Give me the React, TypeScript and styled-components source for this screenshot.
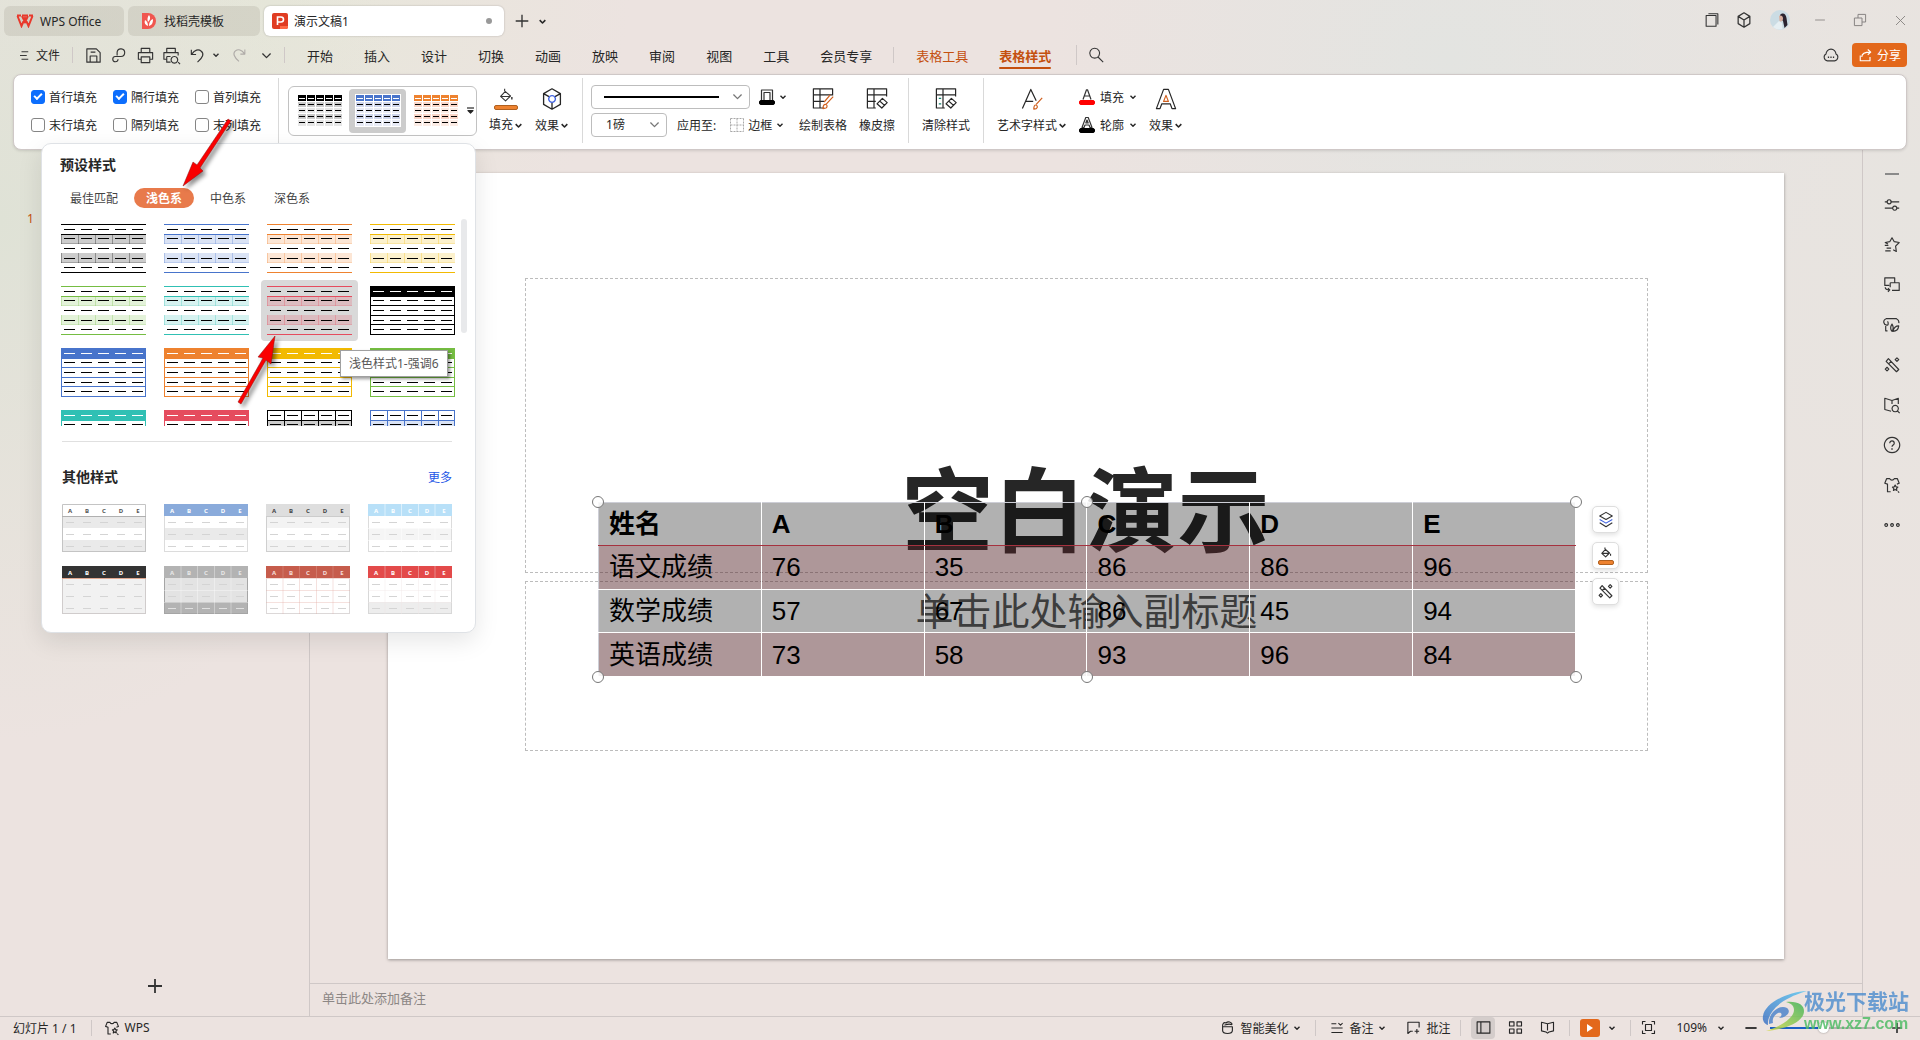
import React from "react";
import styled, { createGlobalStyle, css } from "styled-components";

const ui = `"Noto Sans", "Noto Sans CJK SC", sans-serif`;
const ink = "#333333";
const accent = "#c4500f";
const orange = "#e3681b";
const line = "#cfc8c7";

const Global = createGlobalStyle`
  *, *::before, *::after { box-sizing: border-box; }
  body { margin: 0; font-family: ${ui}; font-size: 12px; color: #262626; }
  button, select, input { font: inherit; color: inherit; }
  button { border: 0; padding: 0; background: none; cursor: pointer; white-space: nowrap; }
  svg { display: block; flex: none; }
`;

const Page = styled.div`
  position: relative;
  min-height: 100vh;
  display: flex;
  flex-direction: column;
  overflow: hidden;
  background:
    radial-gradient(ellipse 420px 520px at 0 220px, #dfe2d6 0%, rgba(223, 226, 214, 0) 100%),
    radial-gradient(ellipse 360px 300px at 270px 0, #e7e7da 0%, rgba(231, 231, 218, 0) 100%),
    radial-gradient(ellipse 400px 400px at 1450px 60px, #e3e4e1 0%, rgba(227, 228, 225, 0) 100%),
    radial-gradient(ellipse 600px 700px at 1920px 200px, #e7e4e0 0%, rgba(231, 228, 224, 0) 100%),
    #ece3e0;
`;

/* ---------- icons ---------- */

const glyphs: Record<string, React.ReactNode> = {
  menu: <path d="M6 5h9M4 10h9M6 15h9" />,
  save: <path d="M3 3h10l4 4v10H3zM6.5 17v-6.5h7V17M7 6.5h5" />,
  exportPdf: <path d="M7.500 10V6.500a4 4 0 1 1 4 4.500H5.500a2.800 2.800 0 1 0 3 3" />,
  print: <path d="M5.500 7V2.500h9V7M5.500 14H2.500V7h15v7h-3M5.500 11.500h9v6h-9z" />,
  preview: <path d="M5 7V2.500h9V7M5 14H2V7h15v3M5 11v6h4M5 11h4M17 17l2 2M13 11a3.500 3.500 0 1 0 .1 0z" />,
  undo: <path d="M3.500 4v5h5M4 8.500C7 4 11 3 14 5.500S16 12 10 17" />,
  redo: <path d="M16.500 4v5h-5M16 8.500C13 4 9 3 6 5.500S4 12 10 17" />,
  search: <path d="M8.500 2.500a5.500 5.500 0 1 0 .1 0zM12.500 12.500l5.500 5.500" />,
  plus: <path d="M10 3v14M3 10h14" />,
  minus: <path d="M3 10h14" />,
  windows: <path d="M3.500 5h11v12h-11zM6 3h10.500v12" />,
  cube: <path d="M10 2l6.500 4v8L10 18l-6.500-4V6zM3.500 6L10 10l6.500-4M10 10v8" />,
  restore: <path d="M3 7.500h9.500V17H3zM7.500 7.500V3H17v9.500h-4.500" />,
  close: <path d="M4 4l12 12M16 4L4 16" />,
  cloud: <><path d="M6 16.500a4 4 0 0 1-1.500-7.500 5.500 5.500 0 0 1 11 0 4 4 0 0 1-1.500 7.500z" /><path d="M6.500 12.500h1.400M9.300 12.500h1.400M12.100 12.500h1.400" strokeWidth="1.600" /></>,
  share: <path d="M3 10v7h13v-5M5 12c0-4 3-6.500 11.500-6.500M13 2l4 3.500-4 3.500" />,
  bucket: <><path d="M8 4l7 6-5.500 5.500L4 10.500 9.500 4.500M8.500 5V2M4.500 10.500h10" /><path d="M16.500 11v3" strokeWidth="1.600" /></>,
  effect: <><path d="M10 1.500l7 4v9l-7 4-7-4v-9zM3 5.500l4.500 2.500M17 5.500L12.500 8M10 18.500V13" /><path d="M10 7.200a2.800 2.800 0 1 0 .1 0z" stroke="#3c5fe0" /></>,
  drawTable: <><path d="M11 17.500H2V1.500h16V7M2 6.500h16M7.500 1.500v16M2 12h9" /><path d="M18.500 8l-6 6.500M10 18c0-2 .5-3.500 2-3.500s2 2 .5 3zM16 6.500l-5 6" stroke="#d0601f" /></>,
  erase: <path d="M9 17.500H2V1.500h16V8M2 6.500h16M7.500 1.500v16M2 12h7M14.500 9.500l4 3.500-4.500 4.500-4-3.500zM12 11.500l4.500 4" />,
  clear: <><path d="M9 17.500H2V1.500h16V8M2 6.500h16M7.500 1.500v16M14.500 9.500l4 3.500-4.500 4.500-4-3.500zM12 11.500l4.500 4" /><path d="M4 9.500h2M4 14h2" stroke="#17806d" /></>,
  wordArt: <><path d="M2 18L9 2l4.500 9.500M4.500 12H11" /><path d="M18.500 9l-5 5.500M11.500 18.500c0-2 .3-3.500 1.600-3.500s2 2 .5 3z" stroke="#d0601f" /></>,
  artEffect: <><path d="M2 18L8 2h4l6 16h-3l-1.500-4h-7L5 18z" /><path d="M10 7l-2 5h4z" stroke="#d0601f" /></>,
  settings: <><path d="M2 6.500h3M8.500 6.500H18M2 13.500h9M15 13.500h3" /><path d="M6.800 4.200a2.300 2.300 0 1 0 .1 0zM13 11.200a2.300 2.300 0 1 0 .1 0z" /></>,
  star: <path d="M5.500 9L2.500 7.200l5-.9L10 2l2.500 4.300 5.500.9-4 4 .8 6-3.500-2M2 10.500h4M4 13.500h5M2.500 16.500h6" />,
  swap: <path d="M7 10.500H2V2h11v5M8 7.500h10V16H10M8 7.500v5M2.500 12.500c0 2.500 1.500 3 5 3M5.500 13.500l2 2-2 2" />,
  leaf: <path d="M5 16.500H3V11M5.500 10a3.500 3.500 0 0 1-2-7h11.500c2 1 3 3 2.500 5M5.500 10C6 8 6 7 5 6M10 17c-2.500-3-2-5 0-8 2 3 2 5 0 8zM11 17c1-4 3-6 6.500-6-.5 4-3 6-6.500 6z" />,
  wand: <path d="M6 3l11.500 12-2.500 2.500L3.500 6zM6 9l3-3M15.500 2l2 2-2 2-2-2zM4.500 12.500l2 2-2 2-2-2z" />,
  bookSearch: <path d="M9 17l-7-2V2.500L10 5l7-2.500V9M10 5v4M13.500 10.500a3.500 3.500 0 1 0 .1 0zM16 16.500l2.500 2.500" />,
  help: <><path d="M10 1.500a8.500 8.500 0 1 0 .1 0zM7.500 8c0-3.500 5-3.500 5 0 0 2-2.500 2-2.500 4" /><path d="M10 13.700v1.500" strokeWidth="1.600" /></>,
  shirt: <path d="M8.500 17.500H5V9L2 8l2-5h3.500c1 2 4 2 5 0H16l2 5-2.500 1M13.500 10l1 2 2 .3-1.500 1.600.4 2.200-1.900-1-1.900 1 .4-2.200-1.500-1.600 2-.3zM16.500 17l1.500 1.500" />,
  more: <path d="M3.500 8.500a1.500 1.500 0 1 0 .1 0zM10 8.500a1.500 1.500 0 1 0 .1 0zM16.500 8.500a1.500 1.500 0 1 0 .1 0z" />,
  beautify: <path d="M3.500 9h13v5c0 2-2 4-6.500 4s-6.500-2-6.500-4zM3.500 9C3 5 5 2.500 8 4c3-3 7-1 8.500 2M6 7c3-1 6-3 10-.5" />,
  notes: <path d="M2 4h7M2 10h16M2 16.500h16M12 3l3 3 3-3" />,
  comment: <path d="M9 15H6l-3.500 3V3h15v7M14.500 12v6M11.500 15h6" />,
  normalView: <path d="M1.500 2.500h17v15h-17zM6.500 2.500v15" />,
  gridView: <path d="M2 2.500h6v5.500H2zM12 2.500h6v5.500h-6zM2 12h6v5.500H2zM12 12h6v5.500h-6z" />,
  readView: <path d="M10 5L2 3v11.500l6 1.500 2 1.500 2-1.500 6-1.500V3zM10 5v9" />,
  fit: <path d="M2 6V2h4M14 2h4v4M18 14v4h-4M6 18H2v-4M6 6h8v8H6z" />,
  layers: <><path d="M10 1.500l7 4-7 4-7-4zM3 13l7 4.500 7-4.500" /><path d="M3 9.500l7 4 7-4" stroke="#3c5fe0" /></>,
};

const Svg = styled.svg<{ $w?: number }>`
  fill: none;
  stroke: currentColor;
  stroke-width: ${(p) => p.$w || 1.2};
  stroke-linejoin: round;
`;

const Icon = ({ name, size = 18, weight }: { name: string; size?: number; weight?: number }) => (
  <Svg width={size} height={size} viewBox="0 0 20 20" $w={weight} aria-hidden>{glyphs[name]}</Svg>
);

const Caret = ({ size = 8, weight = 1.4 }: { size?: number; weight?: number }) => (
  <Svg width={size} height={size} viewBox="0 0 8 8" $w={weight} aria-hidden><path d="M1.500 2.800L4 5.300l2.500-2.500" /></Svg>
);

/* ---------- window tabs ---------- */

const TitleBar = styled.header`
  display: flex;
  align-items: center;
  height: 36px;
  padding: 6px 0 0 4px;
  gap: 4px;
`;

const DocTab = styled.button<{ $width: number; $active?: boolean }>`
  display: flex;
  align-items: center;
  gap: 6px;
  width: ${(p) => p.$width}px;
  height: 30px;
  padding: 0 12px;
  border-radius: 6px;
  background: ${(p) => (p.$active ? "#ffffff" : "rgba(120, 115, 100, 0.15)")};
  box-shadow: ${(p) => (p.$active ? "0 0 2px rgba(0, 0, 0, 0.25)" : "none")};
  ${(p) => p.$active && css`padding: 0 12px 0 8px;`}
`;

const UnsavedDot = styled.span`
  width: 6px;
  height: 6px;
  margin-left: auto;
  border-radius: 50%;
  background: #999999;
`;

const IconButton = styled.button<{ $width?: number; $muted?: boolean }>`
  display: grid;
  place-items: center;
  width: ${(p) => p.$width || 26}px;
  height: 28px;
  color: ${(p) => (p.$muted ? "#aeaaa7" : ink)};
`;

const WindowControls = styled.div`
  display: flex;
  align-items: center;
  margin-left: auto;
  padding-bottom: 2px;
`;

const FrameButton = styled(IconButton)`
  width: 40px;
  color: #85817f;
`;

/* ---------- menu ---------- */

const MenuBar = styled.nav`
  display: flex;
  align-items: center;
  height: 38px;
  padding: 0 13px 0 17px;
`;

const FileButton = styled.button`
  display: flex;
  align-items: center;
  gap: 4px;
  height: 28px;
`;

const Divider = styled.span<{ $h?: number }>`
  flex: none;
  width: 1px;
  height: ${(p) => p.$h || 16}px;
  background: ${line};
`;

const QuickAccess = styled.div`
  display: flex;
  align-items: center;
  padding: 0 8px 0 12px;
`;

const QuickButtons = styled.div`
  display: flex;
  align-items: center;
  padding-left: 7px;
`;

const MenuTabs = styled.div`
  display: flex;
  align-items: center;
  gap: 31px;
  padding: 0 21px 0 22px;
`;

const MenuTab = styled.button<{ $context?: boolean; $current?: boolean }>`
  position: relative;
  height: 28px;
  font-size: 13px;
  color: ${(p) => (p.$context ? accent : "#262626")};
  ${(p) => p.$current && css`
    font-weight: 700;
    &::after {
      content: "";
      position: absolute;
      left: 0;
      right: 0;
      bottom: 0;
      height: 2px;
      border-radius: 1px;
      background: ${accent};
    }
  `}
`;

const SearchSlot = styled.div`
  display: flex;
  align-items: center;
  gap: 6px;
  padding-left: 4px;
`;

const MenuEnd = styled.div`
  display: flex;
  align-items: center;
  gap: 8px;
  margin-left: auto;
`;

const ShareButton = styled.button`
  display: flex;
  align-items: center;
  gap: 4px;
  height: 24px;
  padding: 0 6px;
  border-radius: 4px;
  background: ${orange};
  color: #ffffff;
`;

/* ---------- ribbon ---------- */

const RibbonWrap = styled.section`
  position: relative;
  z-index: 2;
  padding: 0 13px;
`;

const Ribbon = styled.div`
  display: flex;
  align-items: center;
  height: 76px;
  padding-bottom: 3px;
  border: 1px solid ${line};
  border-radius: 8px;
  background: #ffffff;
  box-shadow: 0 1px 3px rgba(0, 0, 0, 0.12);
`;

const Group = styled.div<{ $left?: number; $last?: boolean }>`
  display: flex;
  align-items: center;
  gap: 12px;
  height: 65px;
  padding: 0 13px 0 ${(p) => p.$left || 13}px;
  border-right: ${(p) => (p.$last ? "0" : "1px solid #d9d9d9")};
`;

const CheckGrid = styled.div`
  display: grid;
  grid-template-columns: 82px 82px 70px;
  gap: 10px 0;
`;

const CheckLabel = styled.label`
  display: flex;
  align-items: center;
  gap: 4px;
  height: 18px;
`;

const CheckBox = styled.input`
  appearance: none;
  display: grid;
  place-items: center;
  width: 14px;
  height: 14px;
  margin: 0;
  border: 1px solid #858585;
  border-radius: 3px;
  background: #ffffff;
  &:checked { border-color: #0d6efd; background: #0d6efd; }
  &:checked::after {
    content: "";
    width: 8px;
    height: 5px;
    border: solid #ffffff;
    border-width: 0 0 2px 2px;
    transform: translateY(-1px) rotate(-45deg);
  }
`;

const Gallery = styled.div`
  display: flex;
  align-items: center;
  width: 189px;
  height: 50px;
  padding-left: 2px;
  gap: 1px;
  border: 1px solid #c2c2c2;
  border-radius: 6px;
`;

const GalleryItem = styled.button<{ $on?: boolean }>`
  display: grid;
  place-items: center;
  width: 57px;
  height: 44px;
  border-radius: 4px;
  background: ${(p) => (p.$on ? "#cccccc" : "none")};
`;

const GalleryMore = styled.button`
  flex: 1;
  height: 44px;
  display: grid;
  place-items: center;
`;

const BigButton = styled.button`
  display: flex;
  flex-direction: column;
  align-items: center;
  gap: 6px;
`;

const ColorBar = styled.span<{ $c: string; $edge?: string; $w: number }>`
  display: block;
  width: ${(p) => p.$w}px;
  height: 5px;
  border: 1px solid ${(p) => p.$edge || p.$c};
  border-radius: 2px;
  background: ${(p) => p.$c};
`;

const IconStack = styled.span`
  display: flex;
  flex-direction: column;
  align-items: center;
  color: ${ink};
`;

const Caption = styled.span`
  display: flex;
  align-items: center;
  gap: 1px;
  height: 18px;
  line-height: 18px;
`;

const Rows = styled.div<{ $gap: number }>`
  display: flex;
  flex-direction: column;
  gap: ${(p) => p.$gap}px;
`;

const Row = styled.div<{ $gap: number }>`
  display: flex;
  align-items: center;
  gap: ${(p) => p.$gap}px;
`;

const RowButton = styled.button<{ $gap?: number }>`
  display: flex;
  align-items: center;
  gap: ${(p) => p.$gap || 4}px;
  height: 18px;
`;

const SelectWrap = styled.label<{ $width: number }>`
  position: relative;
  display: flex;
  align-items: center;
  width: ${(p) => p.$width}px;
  height: 24px;
  border: 1px solid #bdbdbd;
  border-radius: 4px;
  color: #777777;
  select {
    appearance: none;
    width: 100%;
    height: 22px;
    padding: 0 14px;
    border: 0;
    background: none;
    color: #262626;
  }
  svg { position: absolute; right: 5px; }
`;

const LineSample = styled.span`
  position: absolute;
  left: 12px;
  right: 30px;
  height: 2px;
  background: #000000;
`;

const GalleryThumb = ({ head, dark, light, edge }: { head: string; dark: string; light: string; edge?: boolean }) => (
  <svg width="46" height="33" viewBox="-1 -1 46 33" shapeRendering="crispEdges" aria-hidden>
    {edge && <rect x="-1" y="-1" width="46" height="33" fill="#fff" />}
    {[0, 1, 2, 3, 4].map((c) => (
      <g key={c}>
        <rect x={c * 9} y="0" width="8" height="6" fill={head} />
        <rect x={c * 9 + 1} y="3" width="6" height="1" fill="#fff" />
        {[1, 2, 3, 4].map((r) => (
          <g key={r}>
            <rect x={c * 9} y={r * 6 + 1} width="8" height={r === 4 ? 6 : 5} fill={r % 2 ? dark : light} />
            <rect x={c * 9 + 1} y={r * 6 + 3} width="6" height="1" fill="#000" />
          </g>
        ))}
      </g>
    ))}
  </svg>
);

/* ---------- style popover ---------- */

const Popover = styled.div`
  position: absolute;
  top: 69px;
  left: 41px;
  width: 435px;
  padding: 11px 0 18px;
  border: 1px solid #dfe2e6;
  border-radius: 10px;
  background: #ffffff;
  box-shadow: 0 8px 24px rgba(0, 0, 0, 0.1);
`;

const PopTitle = styled.h2`
  margin: 0;
  font-size: 14px;
  line-height: 20px;
  font-weight: 700;
  color: #262626;
`;

const PresetHead = styled.div`
  padding-left: 18px;
`;

const ToneTabs = styled.div`
  display: flex;
  gap: 4px;
  padding: 13px 0 10px 16px;
`;

const ToneTab = styled.button<{ $on?: boolean }>`
  height: 20px;
  padding: 0 12px;
  border-radius: 10px;
  color: ${(p) => (p.$on ? "#ffffff" : "#444444")};
  background: ${(p) => (p.$on ? "#e87a4b" : "none")};
  font-weight: ${(p) => (p.$on ? 700 : 400)};
`;

const PresetArea = styled.div`
  position: relative;
  height: 208px;
  overflow: hidden;
  padding-left: 13px;
`;

const PresetGrid = styled.div`
  display: grid;
  grid-template-columns: repeat(4, 97px);
  gap: 1px 6px;
`;

const PresetButton = styled.button<{ $on?: boolean }>`
  display: grid;
  place-items: center;
  height: 61px;
  border-radius: 4px;
  background: ${(p) => (p.$on ? "#d9d9d9" : "none")};
`;

const ScrollThumb = styled.span`
  position: absolute;
  top: 1px;
  right: 8px;
  width: 6px;
  height: 114px;
  border-radius: 3px;
  background: #e8e9eb;
`;

const OtherSection = styled.section`
  margin: 15px 23px 0 20px;
  padding-top: 25px;
  border-top: 1px solid #e0e0e0;
`;

const OtherHead = styled.div`
  display: flex;
  justify-content: space-between;
  align-items: center;
  margin-bottom: 17px;
`;

const MoreLink = styled.a`
  color: #2457e6;
  text-decoration: none;
`;

const OtherGrid = styled.div`
  display: grid;
  grid-template-columns: repeat(4, 84px);
  justify-content: space-between;
  gap: 14px 0;
`;

const Tooltip = styled.div`
  position: absolute;
  top: 276px;
  left: 340px;
  padding: 0 8px;
  height: 27px;
  line-height: 25px;
  border: 1px solid #a0a0a0;
  background: #ffffff;
  color: #575757;
  box-shadow: 2px 2px 3px rgba(0, 0, 0, 0.4);
`;

type Preset = { kind: 1 | 2 | 3; c: string };
const presets: Preset[] = [
  { kind: 1, c: "#000000" }, { kind: 1, c: "#4874cb" }, { kind: 1, c: "#ee822f" }, { kind: 1, c: "#f2ba02" },
  { kind: 1, c: "#75bd42" }, { kind: 1, c: "#30c0b4" }, { kind: 1, c: "#e54c5e" }, { kind: 2, c: "#000000" },
  { kind: 2, c: "#4874cb" }, { kind: 2, c: "#ee822f" }, { kind: 2, c: "#f2ba02" }, { kind: 2, c: "#75bd42" },
  { kind: 2, c: "#30c0b4" }, { kind: 2, c: "#e54c5e" }, { kind: 3, c: "#000000" }, { kind: 3, c: "#4874cb" },
];

const PresetThumb = ({ kind, c }: Preset) => {
  const cols = [0, 1, 2, 3, 4];
  const dashRows = [5, 14, 24, 34, 43];
  return (
    <svg width="85" height="49" viewBox="0 0 85 49" shapeRendering="crispEdges" aria-hidden>
      {kind !== 2 && [[11, 9], [29, 10]].map(([y, h]) => (
        <g key={y}>
          <rect x="0" y={y} width="85" height={h} fill={c} opacity="0.2" />
          <rect x="0" y={y + h - 1} width="85" height="1" fill={c} opacity="0.2" />
          {cols.map((i) => <rect key={i} x={i * 17} y={y} width="1" height={h} fill={c} opacity="0.3" />)}
        </g>
      ))}
      {kind === 1 && [0, 10, 48].map((y) => <rect key={y} y={y} width="85" height="1" fill={c} />)}
      {kind !== 1 && (
        <>
          <rect x="0.5" y="0.5" width="84" height="48" fill="none" stroke={c} />
          {[10, 19, 29, 38].map((y) => <rect key={y} y={y} width="85" height="1" fill={c} />)}
        </>
      )}
      {kind === 2 && <rect width="85" height="11" fill={c} />}
      {kind === 3 && cols.map((i) => <rect key={i} x={i * 17} width="1" height="49" fill={c} />)}
      {dashRows.map((y, r) => cols.map((i) => (
        <rect key={`${r}${i}`} x={i * 17 + 3} y={y} width="11" height="1" fill={kind === 2 && r === 0 ? "#fff" : "#000"} />
      )))}
    </svg>
  );
};

type Other = { head: string; text: string; rows: string[]; edge: string; grid?: string; under?: string };
const others: Other[] = [
  { head: "#ffffff", text: "#555555", rows: ["#eaeaea", "#ffffff", "#eaeaea"], edge: "#c4c4c4", under: "#b0b0b0" },
  { head: "#8aabdb", text: "#ffffff", rows: ["#ffffff", "#eaeaea", "#ffffff"], edge: "#dcdcdc" },
  { head: "#dedede", text: "#444444", rows: ["#f3f3f3", "#ffffff", "#f3f3f3"], edge: "#cfcfcf", under: "#cccccc" },
  { head: "#b8e0f8", text: "#ffffff", rows: ["#ffffff", "#f5f5f5", "#ffffff"], edge: "#dcdcdc", grid: "rgba(255,255,255,.5)" },
  { head: "#333333", text: "#ffffff", rows: ["#f1f1f1", "#f1f1f1", "#f1f1f1"], edge: "#d0cccc", under: "#e0a890" },
  { head: "#b3b3b3", text: "#e8e8e8", rows: ["#e3e3e3", "#e3e3e3", "#b3b3b3"], edge: "#a5a5a5", grid: "rgba(255,255,255,.35)" },
  { head: "#c65c4c", text: "#f5dcd8", rows: ["#ffffff", "#ffffff", "#ffffff"], edge: "#dcd8d8", grid: "rgba(225,170,160,.35)", under: "#f2dcd8" },
  { head: "#e34a4a", text: "#ffffff", rows: ["#ffffff", "#ffffff", "#ededed"], edge: "#d8d8d8", grid: "rgba(240,230,230,.4)" },
];

const ThumbText = styled.text`
  font: 700 6px ${ui};
  text-anchor: middle;
  stroke: none;
`;

const OtherThumb = ({ o }: { o: Other }) => (
  <svg width="84" height="48" viewBox="0 0 84 48" aria-hidden>
    {o.rows.map((c, i) => <rect key={i} y={12 + i * 12} width="84" height="12" fill={c} />)}
    <rect x="0.5" y="0.5" width="83" height="47" fill="none" stroke={o.edge} />
    <rect width="84" height="12" fill={o.head} />
    {o.head === "#ffffff" && <path d="M.5 12V.5h83V12" fill="none" stroke={o.edge} />}
    {o.under && <path d="M0 12.500h84" stroke={o.under} />}
    {o.grid && <path d="M17 0v48M33.500 0v48M50.500 0v48M67 0v48M0 24.500h84M0 36.500h84" stroke={o.grid} />}
    {["A", "B", "C", "D", "E"].map((t, i) => {
      const x = 8 + i * 17;
      return (
        <g key={t}>
          <ThumbText x={x} y="8.500" fill={o.text}>{t}</ThumbText>
          {[18, 30, 42].map((y, r) => (
            <rect key={y} x={x - 4} y={y} width="8" height="1" fill={o.rows[r] === "#b3b3b3" ? "#e0e0e0" : "#d4d4d4"} />
          ))}
        </g>
      );
    })}
  </svg>
);

/* ---------- workspace ---------- */

const Workspace = styled.main`
  flex: 1;
  display: grid;
  grid-template-columns: 309px 1fr 57px;
`;

const Outline = styled.aside`
  display: flex;
  flex-direction: column;
  justify-content: space-between;
  align-items: center;
  padding: 60px 0 16px;
`;

const SlideNumber = styled.span`
  align-self: flex-start;
  padding-left: 27px;
  line-height: 18px;
  color: ${accent};
`;

const Editor = styled.div`
  display: flex;
  flex-direction: column;
  border-left: 1px solid ${line};
  border-right: 1px solid ${line};
`;

const Stage = styled.div`
  flex: 1;
  display: flex;
  padding: 23px 78px 24px;
`;

const Slide = styled.section`
  position: relative;
  flex: 1;
  background: #ffffff;
  box-shadow: 0 1px 3px rgba(0, 0, 0, 0.35);
`;

const Placeholder = styled.div<{ $top: number; $height: number }>`
  position: absolute;
  left: 137px;
  right: 136px;
  top: ${(p) => p.$top}px;
  height: ${(p) => p.$height}px;
  border: 1px dashed #bcbcbc;
  text-align: center;
`;

const SlideTitle = styled.h1`
  position: absolute;
  inset: auto 2px 11px 0;
  margin: 0;
  font: 700 92px/112px "Noto Sans CJK SC", sans-serif;
  color: #262626;
`;

const SlideSubtitle = styled.p`
  margin: 0;
  font: 400 38px/54px "Noto Sans CJK SC", sans-serif;
  color: #595959;
`;

const TableFrame = styled.div`
  position: absolute;
  left: 210px;
  right: 208px;
  top: 329px;
`;

const ScoreTable = styled.table`
  width: 100%;
  height: 175px;
  table-layout: fixed;
  border-collapse: collapse;
  border: 1px solid #cdced6;
  font: 400 26px/32px "Liberation Sans", "Noto Sans CJK SC", sans-serif;
  color: #000000;
  th, td {
    height: 43px;
    padding: 0 10px;
    text-align: left;
    border-right: 1px solid #ffffff;
    border-bottom: 1px solid #ffffff;
    background: rgba(0, 0, 0, 0.306);
  }
  tbody th { font-weight: 400; }
  thead th { border-bottom-color: #a5323f; }
  tbody tr:nth-child(odd) > * { background: rgba(81, 32, 36, 0.465); }
`;

const Handle = styled.span<{ $x: number; $y: number }>`
  position: absolute;
  left: ${(p) => p.$x}%;
  top: ${(p) => p.$y}%;
  width: 12px;
  height: 12px;
  margin: -6px;
  border: 1px solid #777777;
  border-radius: 50%;
  background: rgba(255, 255, 255, 0.85);
`;

const FloatTools = styled.div`
  position: absolute;
  top: 4px;
  left: calc(100% + 16px);
  display: flex;
  flex-direction: column;
  gap: 9px;
`;

const FloatButton = styled.button`
  display: grid;
  place-items: center;
  align-content: center;
  width: 27px;
  height: 27px;
  border: 1px solid #dedede;
  border-radius: 5px;
  background: #ffffff;
  box-shadow: 0 2px 5px rgba(0, 0, 0, 0.12);
  color: ${ink};
`;

const Notes = styled.label`
  display: flex;
  align-items: center;
  height: 33px;
  padding: 0 12px 4px;
  border-top: 1px solid ${line};
`;

const NotesInput = styled.input`
  width: 100%;
  padding: 0;
  border: 0;
  outline: 0;
  background: none;
  font-size: 13px;
  &::placeholder { color: #8c8785; opacity: 1; }
`;

const SideBar = styled.aside`
  display: flex;
  flex-direction: column;
  align-items: center;
  padding-top: 12px;
`;

const SideButton = styled(IconButton)<{ $first?: boolean }>`
  height: ${(p) => (p.$first ? 23 : 40)}px;
  color: ${(p) => (p.$first ? "#8a8a8a" : ink)};
`;

/* ---------- status bar ---------- */

const StatusBar = styled.footer`
  display: flex;
  align-items: center;
  gap: 10px;
  height: 24px;
  padding: 0 18px 2px 13px;
  border-top: 1px solid ${line};
`;

const StatusButton = styled.button<{ $gap?: number }>`
  display: flex;
  align-items: center;
  gap: ${(p) => p.$gap || 5}px;
  height: 20px;
`;

const StatusGroup = styled.div<{ $gap?: number; $pl?: number; $pr?: number; $end?: boolean }>`
  display: flex;
  align-items: center;
  gap: ${(p) => p.$gap || 0}px;
  padding: 0 ${(p) => p.$pr || 0}px 0 ${(p) => p.$pl || 0}px;
  margin-left: ${(p) => (p.$end ? "auto" : "0")};
`;

const ViewButton = styled.button<{ $on?: boolean }>`
  display: grid;
  place-items: center;
  width: 24px;
  height: 22px;
  border-radius: 4px;
  background: ${(p) => (p.$on ? "#d4cdcb" : "none")};
`;

const PlayButton = styled.button`
  display: grid;
  place-items: center;
  width: 20px;
  height: 18px;
  border-radius: 3px;
  background: ${orange};
`;

const ZoomSlider = styled.input`
  appearance: none;
  width: 105px;
  height: 12px;
  margin: 0;
  background: linear-gradient(90deg, #1b5fc4 52%, #b5b0ae 52%) center / 100% 2px no-repeat;
  &::-webkit-slider-thumb {
    appearance: none;
    width: 11px;
    height: 11px;
    border-radius: 50%;
    background: #ffffff;
    box-shadow: 0 0 2px rgba(0, 0, 0, 0.4);
  }
`;

/* ---------- overlays ---------- */

const Arrows = styled.svg`
  position: absolute;
  top: 110px;
  left: 170px;
  z-index: 3;
  pointer-events: none;
  filter: drop-shadow(3px 3px 2px rgba(0, 0, 0, 0.45));
`;

const Watermark = styled.div`
  position: absolute;
  right: 11px;
  bottom: 4px;
  z-index: 3;
  display: flex;
  align-items: center;
  opacity: 0.85;
  pointer-events: none;
`;

const WatermarkText = styled.div`
  display: flex;
  flex-direction: column;
  margin-left: -4px;
  font: 700 21px/24px "Noto Sans CJK SC", sans-serif;
  color: #5591cf;
  small {
    font: 700 16px/24px "Liberation Sans", sans-serif;
    color: #52bd68;
  }
`;

const checks: [string, boolean][] = [
  ["首行填充", true], ["隔行填充", true], ["首列填充", false],
  ["末行填充", false], ["隔列填充", false], ["末列填充", false],
];
const quick = ["save", "exportPdf", "print", "preview", "undo"];
const menus = ["开始", "插入", "设计", "切换", "动画", "放映", "审阅", "视图", "工具", "会员专享"];
const side = ["settings", "star", "swap", "leaf", "wand", "bookSearch", "help", "shirt", "more"];
const scores = [
  ["语文成绩", 76, 35, 86, 86, 96],
  ["数学成绩", 57, 67, 86, 45, 94],
  ["英语成绩", 73, 58, 93, 96, 84],
];

const Big = ({ icon, text, caret }: { icon: React.ReactNode; text: string; caret?: boolean }) => (
  <BigButton>
    {icon}
    <Caption>{text}{caret && <Caret size={9} />}</Caption>
  </BigButton>
);

const Letter = ({ color, outline }: { color: string; outline?: boolean }) => (
  <IconStack>
    <Svg width="16" height="11" viewBox="0 0 16 11">
      {outline
        ? <path d="M3 10.500L6.800.5h2.400l3.800 10h-2L10 8H6l-1 2.500zM8 3L6.800 6h2.400z" />
        : <path d="M4 10.500L7.500.8h1l3.500 9.700M5.500 7h5" />}
    </Svg>
    <ColorBar $c={color} $w={16} />
  </IconStack>
);

export default function App() {
  return (
    <Page>
      <Global />
      <TitleBar>
        <DocTab $width={120}>
          <svg width="18" height="14" viewBox="0 0 18 14" fill="none" stroke="#e8392c" strokeWidth="2">
            <path d="M1 1.500h4M6 1.500h6M17 1.500h-4M1.500 2L5.500 12 9 4l3.500 8 4-10M6 2l3 6 3-6" />
          </svg>
          WPS Office
        </DocTab>
        <DocTab $width={132}>
          <svg width="18" height="18" viewBox="0 0 18 18">
            <path d="M2 1h6a8 8 0 0 1 0 16H2z" fill="#f0564f" />
            <path d="M9 3c2 3 1 5-1 7-1-3-.5-5 1-7zM5 8c2 1 3 3 3 6-3-1-4-3-3-6zM13 7c0 4-1 6-4 7 0-3 1-6 4-7z" fill="#fff" />
          </svg>
          找稻壳模板
        </DocTab>
        <DocTab $width={240} $active>
          <svg width="16" height="16" viewBox="0 0 16 16">
            <rect width="16" height="16" rx="2" fill="#e03c22" />
            <path d="M8 13h8v1a2 2 0 0 1-2 2H8z" fill="#ff6a45" />
            <path d="M5.500 12V4h3.500a2.500 2.500 0 0 1 0 5H5.500" fill="none" stroke="#fff" strokeWidth="1.600" />
          </svg>
          演示文稿1
          <UnsavedDot />
        </DocTab>
        <Row $gap={2}>
          <IconButton $width={28} aria-label="新建"><Icon name="plus" weight={1.5} /></IconButton>
          <Caret size={9} />
        </Row>
        <WindowControls>
          <IconButton $width={32} aria-label="窗口"><Icon name="windows" /></IconButton>
          <IconButton $width={32} aria-label="应用"><Icon name="cube" weight={1.4} /></IconButton>
          <IconButton $width={40} aria-label="账号">
            <svg width="20" height="20" viewBox="0 0 20 20">
              <circle cx="10" cy="10" r="10" fill="#cbdce4" />
              <path d="M10 5c3-3 6-1 6.500 3l1 7-3 3-1.500-7-3-3z" fill="#2b2430" />
              <path d="M3 17l6-6 3 2 .5 6a10 10 0 0 1-9.500-2z" fill="#e6eff3" />
              <path d="M9 6c2-1 4 0 4 2.500S11 12 9.500 11z" fill="#d9b1a2" />
            </svg>
          </IconButton>
          <FrameButton aria-label="最小化"><Icon name="minus" size={14} /></FrameButton>
          <FrameButton aria-label="还原"><Icon name="restore" size={16} /></FrameButton>
          <FrameButton aria-label="关闭"><Icon name="close" size={15} /></FrameButton>
        </WindowControls>
      </TitleBar>

      <MenuBar>
        <FileButton><Icon name="menu" size={15} />文件</FileButton>
        <QuickAccess>
          <Divider />
          <QuickButtons>
            {quick.map((n) => <IconButton key={n} aria-label={n}><Icon name={n} size={19} /></IconButton>)}
            <IconButton $width={12} aria-label="撤销列表"><Caret /></IconButton>
            <IconButton $width={34} $muted aria-label="恢复"><Icon name="redo" size={18} /></IconButton>
            <IconButton $width={20} aria-label="更多"><Caret size={13} weight={0.8} /></IconButton>
          </QuickButtons>
        </QuickAccess>
        <Divider />
        <MenuTabs>{menus.map((m) => <MenuTab key={m}>{m}</MenuTab>)}</MenuTabs>
        <Divider />
        <MenuTabs>
          <MenuTab $context>表格工具</MenuTab>
          <MenuTab $context $current>表格样式</MenuTab>
        </MenuTabs>
        <SearchSlot>
          <Divider $h={20} />
          <IconButton aria-label="搜索"><Icon name="search" /></IconButton>
        </SearchSlot>
        <MenuEnd>
          <IconButton aria-label="云同步"><Icon name="cloud" /></IconButton>
          <ShareButton><Icon name="share" size={15} weight={1.5} />分享</ShareButton>
        </MenuEnd>
      </MenuBar>

      <RibbonWrap>
        <Ribbon>
          <Group $left={17}>
            <CheckGrid>
              {checks.map(([t, on]) => (
                <CheckLabel key={t}><CheckBox type="checkbox" defaultChecked={on} />{t}</CheckLabel>
              ))}
            </CheckGrid>
          </Group>
          <Group $left={9}>
            <Gallery>
              <GalleryItem aria-label="黑色"><GalleryThumb head="#000000" dark="#cbcbcb" light="#e7e7e7" /></GalleryItem>
              <GalleryItem $on aria-label="蓝色"><GalleryThumb head="#4874cb" dark="#cfd6ec" light="#e8ebf6" edge /></GalleryItem>
              <GalleryItem aria-label="橙色"><GalleryThumb head="#ee822f" dark="#fad6c8" light="#fcece5" /></GalleryItem>
              <GalleryMore aria-label="展开样式">
                <Svg width="7" height="7" viewBox="0 0 7 7"><path d="M0 1h7" /><path d="M1 3.500h5L3.500 6z" fill="currentColor" /></Svg>
              </GalleryMore>
            </Gallery>
            <Big caret text="填充" icon={<IconStack><Icon name="bucket" size={18} /><ColorBar $c="#ee822f" $edge="#b0601f" $w={24} /></IconStack>} />
            <Big caret text="效果" icon={<Icon name="effect" size={24} weight={1.1} />} />
          </Group>
          <Group $left={8}>
            <Rows $gap={4}>
              <Row $gap={8}>
                <SelectWrap $width={159}>
                  <select aria-label="线型"><option></option></select>
                  <LineSample />
                  <Caret size={13} weight={0.8} />
                </SelectWrap>
                <RowButton $gap={3} aria-label="边框颜色">
                  <IconStack>
                    <Svg width="18" height="11" viewBox="0 0 18 11"><path d="M3.500 11V1h11v10M6 11V3.500h6V11" /></Svg>
                    <ColorBar $c="#000000" $w={16} />
                  </IconStack>
                  <Caret />
                </RowButton>
              </Row>
              <Row $gap={10}>
                <SelectWrap $width={76}>
                  <select aria-label="粗细"><option>1磅</option></select>
                  <Caret size={13} weight={0.8} />
                </SelectWrap>
                应用至:
                <RowButton>
                  <svg width="18" height="14" viewBox="0 0 18 14" fill="none" stroke="#a8a8a8" strokeDasharray="2 1">
                    <path d="M4.500.5h13M4.500 7h13M4.500 13.500h13M4.500.5v13M11 .5v13M17.500.5v13" />
                  </svg>
                  边框
                  <Caret />
                </RowButton>
              </Row>
            </Rows>
            <Big text="绘制表格" icon={<Icon name="drawTable" size={24} weight={1} />} />
            <Big text="橡皮擦" icon={<Icon name="erase" size={24} weight={1} />} />
          </Group>
          <Group>
            <Big text="清除样式" icon={<Icon name="clear" size={24} weight={1} />} />
          </Group>
          <Group $last>
            <Big caret text="艺术字样式" icon={<Icon name="wordArt" size={24} weight={1} />} />
            <Rows $gap={10}>
              <RowButton $gap={5}><Letter color="#ff0000" />填充<Caret /></RowButton>
              <RowButton $gap={5}><Letter color="#000000" outline />轮廓<Caret /></RowButton>
            </Rows>
            <Big caret text="效果" icon={<Icon name="artEffect" size={24} weight={1} />} />
          </Group>
        </Ribbon>

        <Popover>
          <PresetHead><PopTitle>预设样式</PopTitle></PresetHead>
          <ToneTabs>
            {["最佳匹配", "浅色系", "中色系", "深色系"].map((t) => <ToneTab key={t} $on={t === "浅色系"}>{t}</ToneTab>)}
          </ToneTabs>
          <PresetArea>
            <PresetGrid>
              {presets.map((p, i) => (
                <PresetButton key={i} $on={i === 6} aria-label={`样式${i + 1}`}><PresetThumb {...p} /></PresetButton>
              ))}
            </PresetGrid>
            <ScrollThumb />
          </PresetArea>
          <OtherSection>
            <OtherHead><PopTitle>其他样式</PopTitle><MoreLink href="#more">更多</MoreLink></OtherHead>
            <OtherGrid>
              {others.map((o, i) => <button key={i} aria-label={`其他样式${i + 1}`}><OtherThumb o={o} /></button>)}
            </OtherGrid>
          </OtherSection>
        </Popover>
        <Tooltip role="tooltip">浅色样式1-强调6</Tooltip>
      </RibbonWrap>

      <Workspace>
        <Outline>
          <SlideNumber>1</SlideNumber>
          <IconButton aria-label="新建幻灯片"><Icon name="plus" size={20} weight={1.8} /></IconButton>
        </Outline>
        <Editor>
          <Stage>
            <Slide>
              <Placeholder $top={105} $height={295}><SlideTitle>空白演示</SlideTitle></Placeholder>
              <Placeholder $top={408} $height={170}><SlideSubtitle>单击此处输入副标题</SlideSubtitle></Placeholder>
              <TableFrame>
                <ScoreTable>
                  <thead><tr>{["姓名", "A", "B", "C", "D", "E"].map((h) => <th key={h}>{h}</th>)}</tr></thead>
                  <tbody>
                    {scores.map(([name, ...v]) => (
                      <tr key={name}><th>{name}</th>{v.map((n, i) => <td key={i}>{n}</td>)}</tr>
                    ))}
                  </tbody>
                </ScoreTable>
                {[0, 50, 100].map((x) => [0, 100].map((y) => <Handle key={`${x}-${y}`} $x={x} $y={y} />))}
                <FloatTools>
                  <FloatButton aria-label="图层"><Icon name="layers" size={18} /></FloatButton>
                  <FloatButton aria-label="填充"><Icon name="bucket" size={14} weight={1.6} /><ColorBar $c="#ee822f" $edge="#b0601f" $w={16} /></FloatButton>
                  <FloatButton aria-label="美化"><Icon name="wand" size={17} weight={1.4} /></FloatButton>
                </FloatTools>
              </TableFrame>
            </Slide>
          </Stage>
          <Notes><NotesInput aria-label="备注" placeholder="单击此处添加备注" /></Notes>
        </Editor>
        <SideBar>
          <SideButton $first aria-label="折叠"><Icon name="minus" size={20} weight={2} /></SideButton>
          {side.map((n) => <SideButton key={n} aria-label={n}><Icon name={n} weight={1.3} /></SideButton>)}
        </SideBar>
      </Workspace>

      <StatusBar>
        <StatusGroup $pr={4}>幻灯片 1 / 1</StatusGroup>
        <Divider />
        <StatusGroup $pl={2}>
          <StatusButton><Icon name="shirt" size={16} weight={1.4} />WPS</StatusButton>
        </StatusGroup>
        <StatusGroup $pr={4} $end>
          <StatusButton><Icon name="beautify" size={15} weight={1.5} />智能美化<Caret /></StatusButton>
        </StatusGroup>
        <Divider />
        <StatusGroup $gap={20} $pl={4}>
          <StatusButton><Icon name="notes" size={14} weight={1.5} />备注<Caret /></StatusButton>
          <StatusButton><Icon name="comment" size={15} weight={1.5} />批注</StatusButton>
        </StatusGroup>
        <Divider />
        <StatusGroup $gap={8}>
          <ViewButton $on aria-label="普通视图"><Icon name="normalView" size={15} weight={1.5} /></ViewButton>
          <ViewButton aria-label="浏览视图"><Icon name="gridView" size={15} weight={1.5} /></ViewButton>
          <ViewButton aria-label="阅读视图"><Icon name="readView" size={15} weight={1.5} /></ViewButton>
        </StatusGroup>
        <Divider />
        <StatusGroup $gap={8} $pr={4}>
          <PlayButton aria-label="放映"><svg width="8" height="8" viewBox="0 0 8 8"><path d="M1 0l6 4-6 4z" fill="#fff" /></svg></PlayButton>
          <Caret />
        </StatusGroup>
        <Divider />
        <StatusGroup $gap={20} $pr={8}>
          <Icon name="fit" size={15} weight={1.5} />
          <StatusButton $gap={10}>109%<Caret /></StatusButton>
        </StatusGroup>
        <StatusGroup $gap={15}>
          <IconButton $width={12} aria-label="缩小"><Icon name="minus" size={16} weight={2.4} /></IconButton>
          <ZoomSlider type="range" aria-label="缩放" min={0} max={100} defaultValue={51} />
          <IconButton $width={12} aria-label="放大"><Icon name="plus" size={14} weight={2.4} /></IconButton>
        </StatusGroup>
      </StatusBar>

      <Arrows width="120" height="310" viewBox="170 110 120 310" aria-hidden>
        <path d="M183 186l10-24 4 3 31-46 3 2-31 47 3 3z" fill="#fa0000" stroke="#8a1010" strokeWidth="0.5" />
        <path d="M275 336l-17 21 5 1-25 44 3 2 25-44 5 4z" fill="#fa0000" stroke="#8a1010" strokeWidth="0.5" />
      </Arrows>

      <Watermark>
        <svg width="46" height="42" viewBox="0 0 46 42" aria-hidden>
          <defs>
            <linearGradient id="sky" x1="1" y1="0" x2="0" y2="1"><stop offset="0" stopColor="#5cc8f2" /><stop offset="1" stopColor="#3f72c4" /></linearGradient>
            <linearGradient id="leafy" x1="1" y1="0" x2="0" y2="1"><stop offset="0" stopColor="#3fb35a" /><stop offset="1" stopColor="#d8dc4c" /></linearGradient>
          </defs>
          <path d="M45 0C25 1 3 12 1 25c-1 5 2 8 5 9C5 24 14 9 45 0z" fill="url(#sky)" />
          <path d="M24 11c12-1 18 3 18 9 0 12-22 19-38 20 18-6 28-14 28-21 0-5-4-7-8-8z" fill="url(#leafy)" />
          <path d="M7 33C6 21 18 13 25 17c5 4-1 10-8 10 4-3 3-6-1-5-4 2-6 6-5 10z" fill="#4f86cc" />
        </svg>
        <WatermarkText>极光下载站<small>www.xz7.com</small></WatermarkText>
      </Watermark>
    </Page>
  );
}
